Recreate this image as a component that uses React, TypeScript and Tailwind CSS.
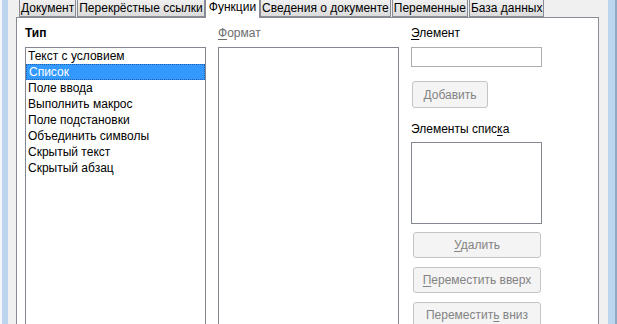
import React from 'react';

const tabs = ['Документ', 'Перекрёстные ссылки', 'Функции', 'Сведения о документе', 'Переменные', 'База данных'];
const types = [
  'Текст с условием',
  'Список',
  'Поле ввода',
  'Выполнить макрос',
  'Поле подстановки',
  'Объединить символы',
  'Скрытый текст',
  'Скрытый абзац',
];

// кнопка в неактивном состоянии (как в диалоге Windows 7)
const DisabledButton = ({ children, className }: { children: React.ReactNode; className: string }) => (
  <div
    className={`flex items-center justify-center rounded-[3px] border border-[#c4c4c4] bg-[#f4f4f4] text-[#838383] ${className}`}
  >
    {children}
  </div>
);

export default function App() {
  const selectedTab = 'Функции';
  const selectedType = 'Список';

  return (
    <div
      className="flex h-[324px] w-[617px] overflow-hidden bg-[#f0f0f0] text-[12px] leading-[16px] text-black"
      style={{ fontFamily: '"Liberation Sans", Arial, sans-serif' }}
    >
      {/* рамка окна слева */}
      <div className="w-[2px] bg-[#f3f7fb]" />
      <div className="w-[6px] bg-[#bcd5ee]" />
      <div className="w-[8px] bg-[#f0f0f0]" />

      <div className="flex w-[583px] flex-col">
        {/* Вкладки */}
        <div className="flex h-[17px] items-start pl-[3px]">
          {tabs.map(t =>
            t === selectedTab ? (
              <div
                key={t}
                className="relative z-10 -ml-[1px] mr-0 h-[18px] border-x border-[#898c95] bg-white px-[3px] leading-[14px]"
              >
                {t}
              </div>
            ) : (
              <div
                key={t}
                className="mr-[1px] h-[17px] border-x border-b border-[#898c95] bg-linear-to-b from-[#f0f0f0] to-[#dcdcdc] px-[1px] pt-[1px] leading-[15px]"
              >
                {t}
              </div>
            )
          )}
        </div>

        {/* Панель */}
        <div className="flex flex-1 gap-[12px] border-x border-t border-[#898c95] bg-white pl-[8px] pt-[7px]">
          {/* Тип */}
          <div className="flex w-[181px] flex-col">
            <div className="h-[16px] font-bold">Тип</div>
            <div className="mt-[6px] h-[290px] border border-[#828790] bg-white">
              {types.map(t => (
                <div
                  key={t}
                  className={`h-[16px] pl-[2px] ${
                    t === selectedType ? 'border border-dotted border-[#1e5fb0] bg-[#3399ff] pl-[1px] leading-[14px] text-white' : ''
                  }`}
                >
                  {t}
                </div>
              ))}
            </div>
          </div>

          {/* Формат */}
          <div className="flex w-[181px] flex-col">
            <div className="h-[16px] text-[#6d6d6d]">
              <span className="underline underline-offset-2">Ф</span>ормат
            </div>
            <div className="mt-[6px] h-[290px] border border-[#828790] bg-white" />
          </div>

          {/* Элементы */}
          <div className="flex w-[131px] flex-col">
            <div className="h-[16px]">
              <span className="underline underline-offset-2">Э</span>лемент
            </div>
            <div className="mt-[6px] h-[20px] border border-[#abadb3] bg-white" />
            <DisabledButton className="ml-[1px] mt-[14px] h-[27px] w-[76px]">
              <span>
                <span className="underline underline-offset-2">Д</span>обавить
              </span>
            </DisabledButton>
            <div className="mt-[13px] h-[16px]">
              Элементы спис<span className="underline underline-offset-2">к</span>а
            </div>
            <div className="mt-[5px] h-[82px] border border-[#828790] bg-white" />
            <DisabledButton className="ml-[2px] mt-[8px] h-[26px] w-[128px]">
              <span>
                <span className="underline underline-offset-2">У</span>далить
              </span>
            </DisabledButton>
            <DisabledButton className="ml-[2px] mt-[9px] h-[26px] w-[128px]">
              <span>
                <span className="underline underline-offset-2">П</span>ереместить вверх
              </span>
            </DisabledButton>
            <DisabledButton className="ml-[2px] mt-[9px] h-[26px] w-[128px] shrink-0">
              <span>
                Переместит<span className="underline underline-offset-2">ь</span> вниз
              </span>
            </DisabledButton>
          </div>
        </div>
      </div>

      {/* рамка окна справа */}
      <div className="w-[9px] bg-[#f0f0f0]" />
      <div className="w-[7px] bg-[#bcd5ee]" />
      <div className="w-[2px] bg-[#8fa9c4]" />
    </div>
  );
}
